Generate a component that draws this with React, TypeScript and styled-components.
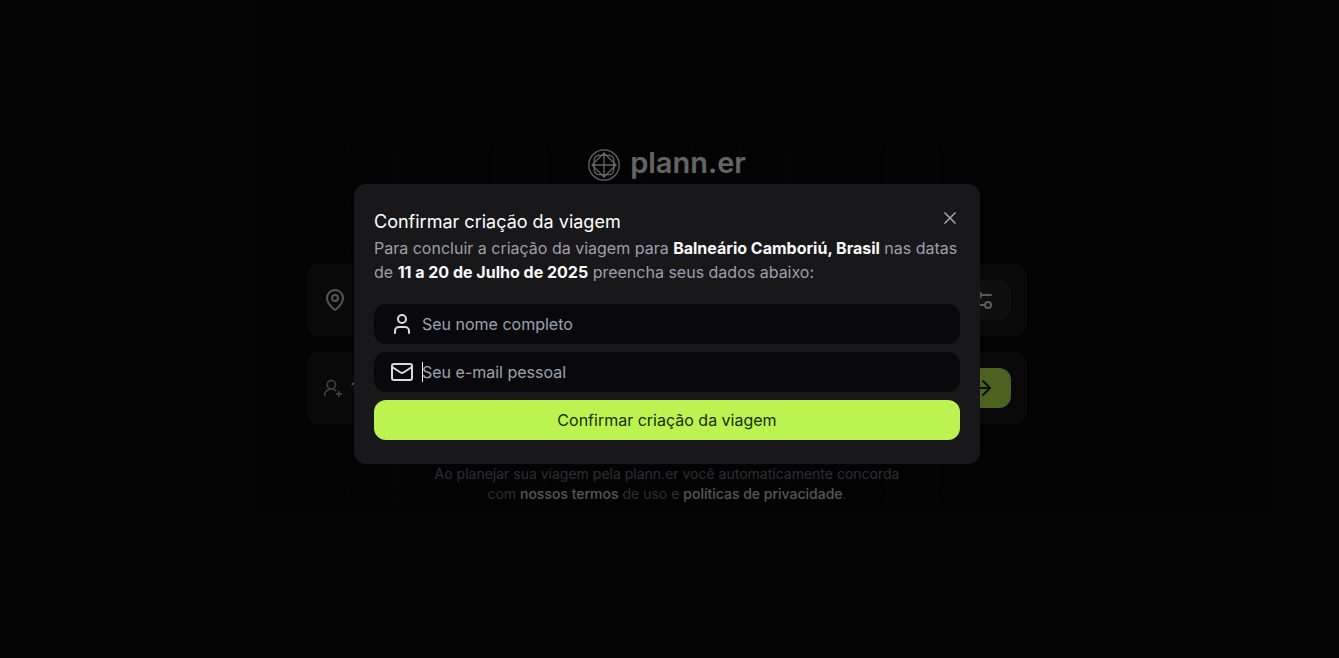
import React from "react";
import styled, { createGlobalStyle } from "styled-components";
import { ArrowRight, Mail, MapPin, User, UserRoundPlus, X } from "lucide-react";

const GlobalStyle = createGlobalStyle`
  *, *::before, *::after { box-sizing: border-box; }
  body {
    margin: 0;
    background: #09090b;
    color: #fafafa;
    font-family: Inter, "Liberation Sans", sans-serif;
    font-size: 16px;
    line-height: 24px;
  }
  h1, h2, p { margin: 0; }
  button, input { font: inherit; border: 0; }
  button { cursor: pointer; }
  a { color: inherit; text-decoration: none; }
`;

const Page = styled.div`
  position: relative;
  min-height: 100vh;
  padding: 0 5px 10px 0;
  display: flex;
  align-items: center;
  justify-content: center;
`;

const Planner = styled.main`
  width: 100%;
  max-width: 720px;
  display: flex;
  flex-direction: column;
  gap: 40px;
  background:
    linear-gradient(90deg, #0e0e10 1px, transparent 1px) 41px 7px / 49px 49px,
    linear-gradient(#0e0e10 1px, transparent 1px) 41px 7px / 49px 49px;
`;

const Brand = styled.header`
  min-height: 80px;
`;

const BrandRow = styled.div`
  display: flex;
  justify-content: center;
  align-items: center;
  gap: 10px;
  height: 42px;
`;

const BrandName = styled.h1`
  font-size: 29px;
  line-height: 36px;
  font-weight: 600;
  padding-bottom: 4px;
`;

const Steps = styled.section`
  display: flex;
  flex-direction: column;
  gap: 16px;
`;

const Step = styled.div`
  display: flex;
  align-items: center;
  justify-content: space-between;
  padding: 16px;
  border-radius: 12px;
  background: #18181b;
  color: #fafafa;
`;

const Guests = styled.span`
  display: flex;
  align-items: center;
  gap: 8px;
  svg { color: #a1a1aa; }
`;

const StepButton = styled.button<{ $primary?: boolean }>`
  display: flex;
  align-items: center;
  justify-content: flex-end;
  width: 160px;
  height: 40px;
  padding: 0 16px;
  border-radius: 12px;
  background: ${(p) => (p.$primary ? "#bbf451" : "#27272a")};
  color: ${(p) => (p.$primary ? "#192e03" : "#e4e4e7")};
`;

const Terms = styled.p`
  width: 480px;
  max-width: 100%;
  align-self: center;
  text-align: center;
  font-size: 14px;
  line-height: 20px;
  color: #71717a;
  a { color: #d4d4d8; font-weight: 500; }
`;

const Overlay = styled.div`
  position: absolute;
  inset: 0;
  padding: 0 5px 10px 0;
  display: flex;
  align-items: center;
  justify-content: center;
  background: rgba(0, 0, 0, 0.6);
`;

const Dialog = styled.section`
  width: 626px;
  max-width: 100%;
  padding: 24px 20px;
  border-radius: 12px;
  background: #18181b;
  display: flex;
  flex-direction: column;
  gap: 20px;
`;

const DialogTop = styled.div`
  display: flex;
  align-items: flex-start;
  justify-content: space-between;
`;

const DialogTitle = styled.h2`
  font-size: 18px;
  line-height: 28px;
  font-weight: 400;
  color: #ffffff;
`;

const CloseButton = styled.button`
  display: flex;
  padding: 0;
  background: transparent;
  color: #a1a1aa;
`;

const Summary = styled.p`
  color: #9f9fa9;
  strong { color: #fafafa; font-weight: 700; }
`;

const Form = styled.form`
  display: flex;
  flex-direction: column;
  gap: 8px;
`;

const Field = styled.label`
  display: flex;
  align-items: center;
  gap: 8px;
  height: 40px;
  padding: 0 16px;
  border-radius: 12px;
  background: #09090b;
  color: #dcdcdf;
`;

const Input = styled.input<{ $caret?: boolean }>`
  flex: 1;
  min-width: 0;
  padding: 0;
  outline: none;
  color: #fafafa;
  background: ${(p) =>
    p.$caret ? "linear-gradient(#fafafa, #fafafa) 0 50% / 1px 20px no-repeat" : "transparent"};
  &::placeholder { color: #9ca3af; opacity: 1; }
`;

const Submit = styled.button`
  height: 40px;
  padding: 0 16px;
  border-radius: 12px;
  background: #bbf451;
  color: #192e03;
`;

function Logo() {
  return (
    <svg width="32" height="32" viewBox="0 0 32 32" fill="none" stroke="currentColor" strokeWidth="1.3" aria-hidden="true">
      <circle cx="16" cy="16" r="15.2" />
      <path d="M16 4 28 16 16 28 4 16Z M16 4v24 M4 16h24" />
      <path d="M11 6.300h10a4.700 4.700 0 0 1 4.700 4.700v10a4.700 4.700 0 0 1-4.700 4.700H11A4.700 4.700 0 0 1 6.300 21V11A4.700 4.700 0 0 1 11 6.300Z" />
    </svg>
  );
}

function SettingsIcon() {
  return (
    <svg width="24" height="24" viewBox="0 0 24 24" fill="none" stroke="currentColor" strokeWidth="2" strokeLinecap="round" strokeLinejoin="round" aria-hidden="true">
      <path d="M20 7h-9 M14 17H5" />
      <circle cx="17" cy="17" r="3" />
      <circle cx="7" cy="7" r="3" />
    </svg>
  );
}

export default function App() {
  return (
    <>
      <GlobalStyle />
      <Page>
        <Planner>
          <Brand>
            <BrandRow>
              <Logo />
              <BrandName>plann.er</BrandName>
            </BrandRow>
          </Brand>
          <Steps>
            <Step>
              <MapPin size={24} color="#d4d4d8" />
              <StepButton type="button" aria-label="Alterar local e data">
                <SettingsIcon />
              </StepButton>
            </Step>
            <Step>
              <Guests>
                <UserRoundPlus size={20} />1
              </Guests>
              <StepButton type="button" $primary aria-label="Confirmar viagem">
                <ArrowRight size={24} />
              </StepButton>
            </Step>
          </Steps>
          <Terms>
            Ao planejar sua viagem pela plann.er você automaticamente concorda com{" "}
            <a href="#termos">nossos termos</a> de uso e{" "}
            <a href="#privacidade">políticas de privacidade</a>.
          </Terms>
        </Planner>
        <Overlay>
          <Dialog role="dialog" aria-modal="true" aria-labelledby="dialog-title">
            <div>
              <DialogTop>
                <DialogTitle id="dialog-title">Confirmar criação da viagem</DialogTitle>
                <CloseButton type="button" aria-label="Fechar">
                  <X size={20} />
                </CloseButton>
              </DialogTop>
              <Summary>
                Para concluir a criação da viagem para <strong>Balneário Camboriú, Brasil</strong> nas
                datas de <strong>11 a 20 de Julho de 2025</strong> preencha seus dados abaixo:
              </Summary>
            </div>
            <Form onSubmit={(e) => e.preventDefault()}>
              <Field>
                <User size={24} />
                <Input type="text" name="name" aria-label="Seu nome completo" placeholder="Seu nome completo" />
              </Field>
              <Field>
                <Mail size={24} />
                <Input $caret type="email" name="email" aria-label="Seu e-mail pessoal" placeholder="Seu e-mail pessoal" />
              </Field>
              <Submit type="submit">Confirmar criação da viagem</Submit>
            </Form>
          </Dialog>
        </Overlay>
      </Page>
    </>
  );
}
